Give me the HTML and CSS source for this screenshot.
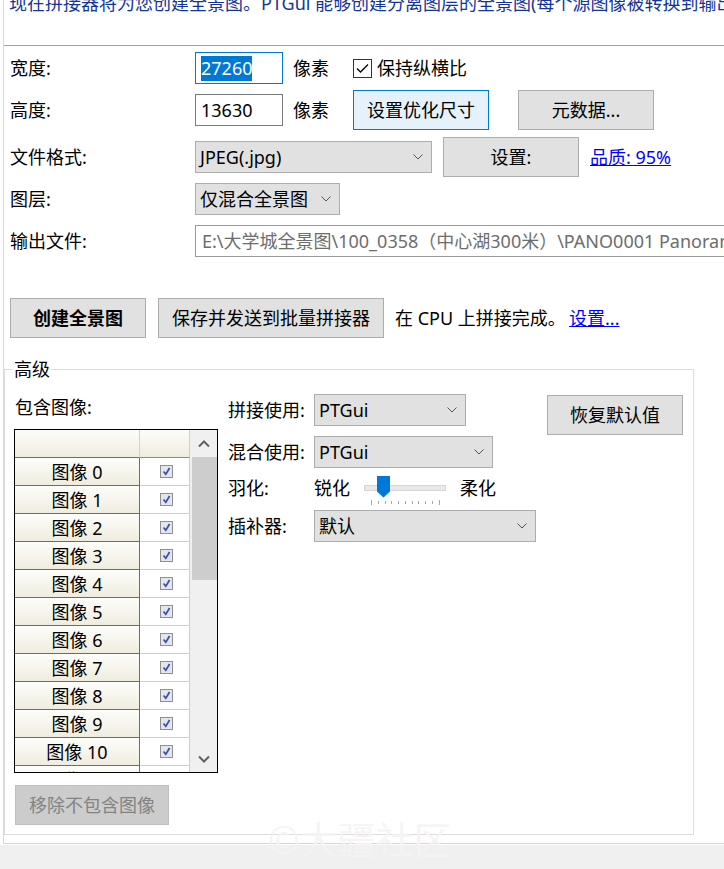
FILE: index.html
```html
<!DOCTYPE html>
<html lang="zh-CN">
<head>
<meta charset="utf-8">
<title>PTGui 创建全景图</title>
<link rel="stylesheet" href="styles.css">
</head>
<body>
<div class="window">
  <div class="panel">
    <p class="intro">现在拼接器将为您创建全景图。PTGui 能够创建分离图层的全景图(每个源图像被转换到输出全景图的独立图层)。</p>
    <div class="rule"></div>

    <div class="form">
      <div class="row r1">
        <span class="lbl">宽度:</span>
        <span class="textbox focus"><span class="seltext">27260</span></span>
        <span class="unit">像素</span>
        <span class="chk">
          <svg width="19" height="19" viewBox="0 0 19 19"><rect x="0.5" y="0.5" width="18" height="18" fill="#fff" stroke="#333"/><path d="M4 9.5 L7.5 13 L15 5.5" fill="none" stroke="#000" stroke-width="1.3"/></svg>
        </span>
        <span class="chk-label">保持纵横比</span>
      </div>

      <div class="row r2">
        <span class="lbl">高度:</span>
        <span class="textbox">13630</span>
        <span class="unit">像素</span>
        <span class="btn hot w136 ml24">设置优化尺寸</span>
        <span class="btn w136 ml29">元数据...</span>
      </div>

      <div class="row r3">
        <span class="lbl">文件格式:</span>
        <span class="combo w237"><span>JPEG(.jpg)</span><svg class="chev" width="10" height="6" viewBox="0 0 10 6"><path d="M0.5 0.5 L5 5 L9.5 0.5" fill="none" stroke="#555" stroke-width="1"/></svg></span>
        <span class="btn w136 ml11">设置:</span>
        <a class="link ml11" href="#">品质: 95%</a>
      </div>

      <div class="row r4">
        <span class="lbl">图层:</span>
        <span class="combo w145"><span>仅混合全景图</span><svg class="chev" width="10" height="6" viewBox="0 0 10 6"><path d="M0.5 0.5 L5 5 L9.5 0.5" fill="none" stroke="#555" stroke-width="1"/></svg></span>
      </div>

      <div class="row r5">
        <span class="lbl">输出文件:</span>
        <span class="textbox readonly">E:\大学城全景图\100_0358（中心湖300米）\PANO0001 Panorama.jpg</span>
      </div>

      <div class="row r6">
        <span class="btn bold w136">创建全景图</span>
        <span class="btn w226 ml12">保存并发送到批量拼接器</span>
        <span class="status-text">在 CPU 上拼接完成。</span>
        <a class="link" href="#">设置...</a>
      </div>
    </div>

    <div class="group">
      <span class="legend">高级</span>
      <div class="gcol-left">
        <div class="inc-label">包含图像:</div>
        <div class="imglist">
          <div class="grid">
            <div class="tr head"><span class="th1"></span><span class="th2"></span></div>
            <div class="tr"><span class="rh">图像 0</span><span class="cc"><svg class="cb" width="13" height="13" viewBox="0 0 13 13"><rect x="0.5" y="0.5" width="12" height="12" fill="#e4e6ee" stroke="#8f8f8f"/><path d="M3.5 6.5 L5.8 9.3 L9.6 3" fill="none" stroke="#3a4fae" stroke-width="1.7"/></svg></span></div>
            <div class="tr"><span class="rh">图像 1</span><span class="cc"><svg class="cb" width="13" height="13" viewBox="0 0 13 13"><rect x="0.5" y="0.5" width="12" height="12" fill="#e4e6ee" stroke="#8f8f8f"/><path d="M3.5 6.5 L5.8 9.3 L9.6 3" fill="none" stroke="#3a4fae" stroke-width="1.7"/></svg></span></div>
            <div class="tr"><span class="rh">图像 2</span><span class="cc"><svg class="cb" width="13" height="13" viewBox="0 0 13 13"><rect x="0.5" y="0.5" width="12" height="12" fill="#e4e6ee" stroke="#8f8f8f"/><path d="M3.5 6.5 L5.8 9.3 L9.6 3" fill="none" stroke="#3a4fae" stroke-width="1.7"/></svg></span></div>
            <div class="tr"><span class="rh">图像 3</span><span class="cc"><svg class="cb" width="13" height="13" viewBox="0 0 13 13"><rect x="0.5" y="0.5" width="12" height="12" fill="#e4e6ee" stroke="#8f8f8f"/><path d="M3.5 6.5 L5.8 9.3 L9.6 3" fill="none" stroke="#3a4fae" stroke-width="1.7"/></svg></span></div>
            <div class="tr"><span class="rh">图像 4</span><span class="cc"><svg class="cb" width="13" height="13" viewBox="0 0 13 13"><rect x="0.5" y="0.5" width="12" height="12" fill="#e4e6ee" stroke="#8f8f8f"/><path d="M3.5 6.5 L5.8 9.3 L9.6 3" fill="none" stroke="#3a4fae" stroke-width="1.7"/></svg></span></div>
            <div class="tr"><span class="rh">图像 5</span><span class="cc"><svg class="cb" width="13" height="13" viewBox="0 0 13 13"><rect x="0.5" y="0.5" width="12" height="12" fill="#e4e6ee" stroke="#8f8f8f"/><path d="M3.5 6.5 L5.8 9.3 L9.6 3" fill="none" stroke="#3a4fae" stroke-width="1.7"/></svg></span></div>
            <div class="tr"><span class="rh">图像 6</span><span class="cc"><svg class="cb" width="13" height="13" viewBox="0 0 13 13"><rect x="0.5" y="0.5" width="12" height="12" fill="#e4e6ee" stroke="#8f8f8f"/><path d="M3.5 6.5 L5.8 9.3 L9.6 3" fill="none" stroke="#3a4fae" stroke-width="1.7"/></svg></span></div>
            <div class="tr"><span class="rh">图像 7</span><span class="cc"><svg class="cb" width="13" height="13" viewBox="0 0 13 13"><rect x="0.5" y="0.5" width="12" height="12" fill="#e4e6ee" stroke="#8f8f8f"/><path d="M3.5 6.5 L5.8 9.3 L9.6 3" fill="none" stroke="#3a4fae" stroke-width="1.7"/></svg></span></div>
            <div class="tr"><span class="rh">图像 8</span><span class="cc"><svg class="cb" width="13" height="13" viewBox="0 0 13 13"><rect x="0.5" y="0.5" width="12" height="12" fill="#e4e6ee" stroke="#8f8f8f"/><path d="M3.5 6.5 L5.8 9.3 L9.6 3" fill="none" stroke="#3a4fae" stroke-width="1.7"/></svg></span></div>
            <div class="tr"><span class="rh">图像 9</span><span class="cc"><svg class="cb" width="13" height="13" viewBox="0 0 13 13"><rect x="0.5" y="0.5" width="12" height="12" fill="#e4e6ee" stroke="#8f8f8f"/><path d="M3.5 6.5 L5.8 9.3 L9.6 3" fill="none" stroke="#3a4fae" stroke-width="1.7"/></svg></span></div>
            <div class="tr"><span class="rh">图像 10</span><span class="cc"><svg class="cb" width="13" height="13" viewBox="0 0 13 13"><rect x="0.5" y="0.5" width="12" height="12" fill="#e4e6ee" stroke="#8f8f8f"/><path d="M3.5 6.5 L5.8 9.3 L9.6 3" fill="none" stroke="#3a4fae" stroke-width="1.7"/></svg></span></div>
            <div class="tr"><span class="rh">图像 11</span><span class="cc"><svg class="cb" width="13" height="13" viewBox="0 0 13 13"><rect x="0.5" y="0.5" width="12" height="12" fill="#e4e6ee" stroke="#8f8f8f"/><path d="M3.5 6.5 L5.8 9.3 L9.6 3" fill="none" stroke="#3a4fae" stroke-width="1.7"/></svg></span></div>
          </div>
          <div class="vscroll">
            <span class="sb-btn"><svg width="12" height="8" viewBox="0 0 12 8"><path d="M1 6.5 L6 1.5 L11 6.5" fill="none" stroke="#606060" stroke-width="2"/></svg></span>
            <span class="sb-thumb"></span>
            <span class="sb-track"></span>
            <span class="sb-btn"><svg width="12" height="8" viewBox="0 0 12 8"><path d="M1 1.5 L6 6.5 L11 1.5" fill="none" stroke="#606060" stroke-width="2"/></svg></span>
          </div>
        </div>
        <span class="btn disabled">移除不包含图像</span>
      </div>

      <div class="gcol-right">
        <div class="grow ga">
          <span class="glbl">拼接使用:</span>
          <span class="combo w152"><span>PTGui</span><svg class="chev" width="10" height="6" viewBox="0 0 10 6"><path d="M0.5 0.5 L5 5 L9.5 0.5" fill="none" stroke="#555" stroke-width="1"/></svg></span>
          <span class="btn w136 reset">恢复默认值</span>
        </div>
        <div class="grow gb">
          <span class="glbl">混合使用:</span>
          <span class="combo w179"><span>PTGui</span><svg class="chev" width="10" height="6" viewBox="0 0 10 6"><path d="M0.5 0.5 L5 5 L9.5 0.5" fill="none" stroke="#555" stroke-width="1"/></svg></span>
        </div>
        <div class="grow gc">
          <span class="glbl">羽化:</span>
          <span>锐化</span>
          <svg class="slider" width="82" height="40" viewBox="0 0 82 40">
            <rect x="0.5" y="17.5" width="81" height="5" fill="#e7eaea" stroke="#d6d6d6"/>
            <g stroke="#a8a8a8" stroke-width="1">
              <path d="M7.5 32 V37"/><path d="M14.5 33 V36"/><path d="M21.5 33 V36"/><path d="M27.5 33 V36"/><path d="M34.5 33 V36"/><path d="M41.5 33 V36"/><path d="M48.5 33 V36"/><path d="M54.5 33 V36"/><path d="M61.5 33 V36"/><path d="M68.5 33 V36"/><path d="M75.5 32 V37"/>
            </g>
            <path d="M13 8 H26 V23.5 L19.5 29.5 L13 23.5 Z" fill="#0078d7"/>
          </svg>
          <span class="soft">柔化</span>
        </div>
        <div class="grow gd">
          <span class="glbl">插补器:</span>
          <span class="combo w222"><span>默认</span><svg class="chev" width="10" height="6" viewBox="0 0 10 6"><path d="M0.5 0.5 L5 5 L9.5 0.5" fill="none" stroke="#555" stroke-width="1"/></svg></span>
        </div>
      </div>
    </div>
  </div>
  <div class="statusbar"></div>
  <div class="watermark">©大疆社区</div>
</div>
</body>
</html>
```

FILE: styles.css
```css
* { box-sizing: border-box; }

html, body {
  margin: 0;
  padding: 0;
  background: #fff;
}

body {
  font-family: "Noto Sans", "Noto Sans CJK SC", sans-serif;
  font-size: 18px;
  line-height: 26px;
  color: #000;
}

.window {
  position: relative;
  width: 724px;
  height: 869px;
  overflow: hidden;
  display: flex;
  flex-direction: column;
}

.panel {
  flex: none;
  height: 844px;
  margin-left: 3px;
  border-left: 1px solid #d9d9d9;
  border-bottom: 1px solid #d6d6d6;
  display: flex;
  flex-direction: column;
}

.statusbar {
  flex: 1;
  margin-top: 1px;
  background: #f0f0f0;
}

.intro {
  margin: -10px 0 0;
  padding-left: 5px;
  height: 26px;
  white-space: nowrap;
  overflow: hidden;
  color: #13359a;
}

.rule {
  margin-top: 29px;
  height: 1px;
  background: #a0a0a0;
  flex: none;
}

.form {
  padding-left: 6px;
  display: flex;
  flex-direction: column;
}

.row {
  display: flex;
  align-items: center;
  height: 40px;
  white-space: nowrap;
  flex: none;
}
.r1 { margin-top: 2px; }
.r2 { margin-top: 2px; }
.r3 { margin-top: 7px; }
.r4 { margin-top: 6px; height: 32px; }
.r5 { margin-top: 10px; height: 32px; }
.r6 { margin-top: 41px; }

.lbl {
  width: 185px;
  flex: none;
}

.textbox {
  flex: none;
  width: 88px;
  height: 32px;
  border: 1px solid #7a7a7a;
  background: #fff;
  padding-left: 5px;
  display: flex;
  align-items: center;
  white-space: nowrap;
  overflow: hidden;
}
.textbox.focus { border-color: #0078d7; }
.textbox.readonly {
  width: 560px;
  border-color: #9a9a9a;
  color: #6d6d6d;
  padding-left: 6px;
}

.seltext {
  background: #0078d7;
  color: #fff;
  line-height: 25px;
  height: 25px;
  display: inline-block;
}

.unit { margin-left: 10px; }

.chk {
  margin-left: 24px;
  display: flex;
  width: 19px;
  height: 19px;
}
.chk-label { margin-left: 5px; }

.btn {
  flex: none;
  height: 40px;
  border: 1px solid #adadad;
  background: #e1e1e1;
  display: flex;
  align-items: center;
  justify-content: center;
  white-space: nowrap;
}
.btn.hot {
  background: #e5f1fb;
  border-color: #0078d7;
}
.btn.bold { font-weight: bold; }
.btn.disabled {
  width: 154px;
  margin-top: 12px;
  margin-left: 1px;
  background: #cccccc;
  border-color: #bfbfbf;
  color: #838383;
}

.w136 { width: 136px; }
.w226 { width: 226px; }
.ml11 { margin-left: 11px; }
.ml12 { margin-left: 12px; }
.ml24 { margin-left: 24px; }
.ml29 { margin-left: 29px; }

.combo {
  flex: none;
  height: 32px;
  border: 1px solid #adadad;
  background: #e1e1e1;
  display: flex;
  align-items: center;
  justify-content: space-between;
  padding: 0 8px 0 4px;
  white-space: nowrap;
}
.w145 { width: 145px; }
.w152 { width: 152px; }
.w179 { width: 179px; }
.w222 { width: 222px; }
.w237 { width: 237px; }

.chev { flex: none; }

.link {
  color: #0000ff;
  text-decoration: underline;
}

.status-text {
  margin-left: 11px;
  width: 174px;
  flex: none;
}

/* group box */
.group {
  position: relative;
  flex: none;
  margin-top: 31px;
  width: 690px;
  height: 466px;
  border: 1px solid #dcdcdc;
  padding: 24px 0 0 9px;
  display: flex;
  align-items: flex-start;
}

.legend {
  position: absolute;
  left: 8px;
  top: -14px;
  padding: 0 1px;
  background: #fff;
  line-height: 26px;
}

.gcol-left {
  width: 204px;
  flex: none;
  display: flex;
  flex-direction: column;
}

.inc-label {
  padding-left: 1px;
  line-height: 26px;
}

.imglist {
  margin-top: 9px;
  width: 204px;
  height: 344px;
  border: 1px solid #000;
  background: #fff;
  display: flex;
  overflow: hidden;
}

.grid {
  width: 175px;
  flex: none;
  display: flex;
  flex-direction: column;
}

.tr {
  display: flex;
  height: 28px;
  flex: none;
}

.th1, .th2, .rh {
  background: linear-gradient(#fdfdfb, #efecdf);
}
.th1 {
  width: 125px;
  border-right: 1px solid #d4d2c8;
  border-bottom: 1px solid #6d6d6d;
}
.th2 {
  width: 50px;
  border-right: 1px solid #cfcfcf;
  border-bottom: 1px solid #8a8a8a;
}

.rh {
  width: 125px;
  border-right: 1px solid #6d6d6d;
  border-bottom: 1px solid #6d6d6d;
  text-align: center;
  line-height: 28px;
  white-space: nowrap;
}

.cc {
  width: 50px;
  border-right: 1px solid #cfcfcf;
  border-bottom: 1px solid #cfcfcf;
  display: flex;
  align-items: center;
  justify-content: center;
  padding-left: 3px;
}

.vscroll {
  width: 27px;
  flex: none;
  background: #f0f0f0;
  display: flex;
  flex-direction: column;
}
.sb-btn {
  height: 27px;
  flex: none;
  display: flex;
  align-items: center;
  justify-content: center;
}
.sb-thumb {
  height: 123px;
  flex: none;
  margin-left: 2px;
  background: #cdcdcd;
}
.sb-track { flex: 1; }

.gcol-right {
  margin-left: 10px;
  flex: 1;
  display: flex;
  flex-direction: column;
}

.grow {
  display: flex;
  align-items: center;
  white-space: nowrap;
}
.glbl {
  width: 86px;
  flex: none;
}
.ga { align-items: flex-start; }
.ga .glbl { line-height: 32px; }
.reset { margin-left: 81px; margin-top: 1px; }
.gb { margin-top: 1px; }
.gc { height: 40px; }
.gd { margin-top: 2px; }

.slider {
  margin-left: 14px;
  flex: none;
}
.soft { margin-left: 14px; }

.watermark {
  position: absolute;
  left: 268px;
  top: 819px;
  font-family: "Noto Sans CJK SC", sans-serif;
  font-size: 38px;
  line-height: 38px;
  color: rgba(246, 243, 243, 0.9);
  white-space: nowrap;
  pointer-events: none;
}
```
